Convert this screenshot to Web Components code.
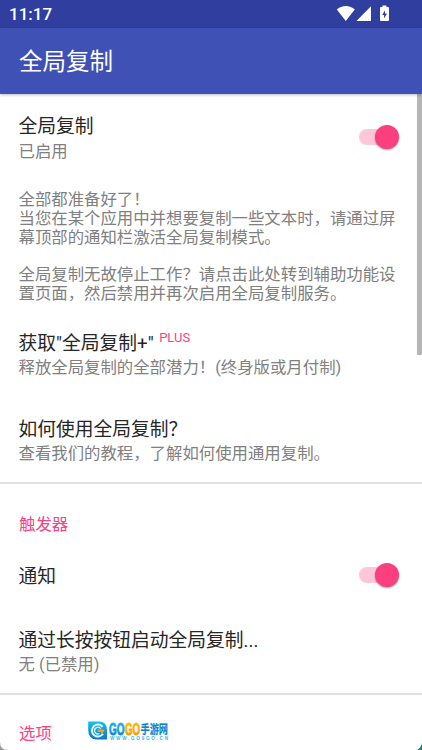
<!DOCTYPE html>
<html lang="zh-CN">
<head>
<meta charset="utf-8">
<title>全局复制</title>
<style>
html,body{margin:0;height:750px;overflow:hidden;background:#fff}
body{font-family:Roboto,"Noto Sans CJK SC",sans-serif;color:#262626}
</style>
</head>
<body>
<app-screen></app-screen>
<script>
const make = (name, html) => customElements.define(name, class extends HTMLElement {
  constructor(){
    super();
    const t = document.createElement('template');
    t.innerHTML = html;
    this.attachShadow({mode:'open'}).append(t.content.cloneNode(true));
  }
});

make('status-bar', `
<style>
:host{display:flex;height:28px;box-sizing:border-box;padding:0 32px 0 9px;align-items:center;justify-content:space-between;background:#303e9f;color:#fff;font-size:17px;line-height:28px;font-weight:500}
svg{display:block;width:54px;height:28px}
</style>
<span>11:17</span>
<svg viewBox="0 0 54 28" fill="#fff">
<path d="M.8 9.6C5.6 4.8 14 4.8 18.8 9.6L9.8 20.9Z"/>
<path d="M20.4 20.9L35 6.2V20.9Z"/>
<path fill-rule="evenodd" d="M46.4 5.4h4V7H52q1 0 1 1v12q0 1-1 1h-7q-1 0-1-1V8q0-1 1-1h1.400ZM49 10.300L46.200 15h1.900v3.400L51 13.600H49Z"/>
</svg>`);

make('app-bar', `
<style>
:host{display:flex;height:66px;box-sizing:border-box;padding:2px 19px 0;align-items:center;background:#3f51b5;color:#fff;font-size:23.5px;line-height:64px;position:relative;z-index:1;box-shadow:0 1px 3px rgba(0,0,0,.25)}
</style><slot></slot>`);

make('pref-switch', `
<style>
:host{display:grid;width:40px;height:24px;align-items:center}
i{grid-area:1/1;display:block}
.track{width:34px;height:16px;border-radius:8px;background:#ffc5d9}
.thumb{width:24px;height:24px;border-radius:50%;background:#fc407f;justify-self:end;box-shadow:0 1px 2px rgba(0,0,0,.38)}
</style><i class="track"></i><i class="thumb"></i>`);

make('pref-row', `
<style>
:host{display:flex;align-items:flex-start;justify-content:space-between;box-sizing:border-box;padding:0 23px 0 18.5px}
.title{font-size:18.75px;line-height:26px;white-space:nowrap}
.sum{font-size:16.4px;line-height:19px;margin-top:var(--gap,1px);color:#808080;white-space:nowrap}
</style>
<div><div class="title"><slot></slot></div><div class="sum"><slot name="summary"></slot></div></div>
<slot name="widget"></slot>`);

make('pref-note', `
<style>
:host{display:block;box-sizing:border-box;padding:0 18.500px;font-size:16.4px;line-height:18.8px;color:#808080}
slot{display:block;white-space:pre}
</style><slot></slot>`);

make('pref-category', `
<style>
:host{display:flex;box-sizing:border-box;align-items:center;padding:0 19px;color:#ff4081;font-size:16.4px;line-height:20px}
</style><slot></slot>`);

make('plus-tag', `
<style>
:host{display:inline-block;margin-left:5.500px;font-size:13px;line-height:12px;color:#ff4081;vertical-align:8px}
</style><slot></slot>`);

make('site-mark', `
<style>
:host{display:block;position:absolute;left:87px;top:719px;width:84px;height:24px}
svg{display:block;overflow:visible}
text{font-family:"Liberation Sans","Noto Sans CJK SC",sans-serif;font-weight:700}
</style>
<svg width="84" height="24" viewBox="0 0 84 24">
<defs>
<linearGradient id="b" x1="0" y1="0" x2="0" y2="1"><stop stop-color="#16c0ef"/><stop offset="1" stop-color="#0877ca"/></linearGradient>
<linearGradient id="o" x1="0" y1="0" x2="0" y2="1"><stop stop-color="#ffc400"/><stop offset="1" stop-color="#ff8b00"/></linearGradient>
</defs>
<path d="M1.200 2.500H12Q20 2.500 20 11V20.500H10Q1.200 20.500 1.200 11Z" fill="url(#b)"/>
<path d="M15.600 7.800A6 6 0 1 0 16 14.800" fill="none" stroke="#e7faff" stroke-width="2"/>
<path d="M13.700 9.800A3.300 3.300 0 1 0 12.500 14.500" fill="none" stroke="#d9f6ff" stroke-width="1.400"/>
<path d="M10.500 10.500H17.700L15 15.800 14 12.900H10.500Z" fill="#ff9f18"/>
<text x="22" y="16" font-size="17" textLength="15.500" lengthAdjust="spacingAndGlyphs" fill="url(#b)" stroke="url(#b)" stroke-width=".8">GO</text>
<text x="38" y="16" font-size="17" textLength="15" lengthAdjust="spacingAndGlyphs" fill="url(#o)" stroke="url(#o)" stroke-width=".8">GO</text>
<text x="53.500" y="15.200" font-size="12.500" textLength="27.500" lengthAdjust="spacingAndGlyphs" fill="#0a83cf" stroke="#0a83cf" stroke-width=".2">手游网</text>
<text x="23" y="21.300" font-size="4.600" textLength="58" fill="#36b4e8">WWW.GO9GO.CN</text>
</svg>`);

make('screen-corners', `
<style>
:host{position:absolute;inset:auto 0 0 0;height:10px;display:flex;justify-content:space-between;align-items:flex-end}
svg{display:block}
</style>
<svg width="8" height="8"><path d="M0 0Q0 8 8 8H0Z" fill="#999"/></svg>
<svg width="5" height="7"><path d="M5 0Q4 5 0 7H5Z" fill="#168276"/></svg>`);

make('app-screen', `
<style>
:host{display:flex;flex-direction:column;position:relative;width:422px;height:750px;overflow:hidden;background:#fff}
main{flex:1;min-height:0;display:flex;flex-direction:column}
main>*{flex:none}
hr{margin:0;border:0;height:2px;background:#e0e0e0}
.bar{position:absolute;right:0;top:94px;width:5px;height:261px;background:#b5b5b5}
.r1{height:86px;padding-top:20px;--gap:2px}
.r1 pref-switch{margin-top:11px}
pref-note{height:123px;padding-top:11px}
.r2{height:100px;padding-top:28px}
.r3{height:79px;padding-top:14px}
.r4{height:63px;padding-top:13px}
.r4 pref-switch{margin-top:-1px}
.r5{height:79px;padding-top:14px}
</style>
<status-bar></status-bar>
<app-bar>全局复制</app-bar>
<main>
<pref-row class="r1">全局复制<span slot="summary">已启用</span><pref-switch slot="widget"></pref-switch></pref-row>
<pref-note>全部都准备好了！
当您在某个应用中并想要复制一些文本时，请通过屏
幕顶部的通知栏激活全局复制模式。

全局复制无故停止工作？请点击此处转到辅助功能设
置页面，然后禁用并再次启用全局复制服务。</pref-note>
<pref-row class="r2">获取"全局复制+"<plus-tag>PLUS</plus-tag><span slot="summary">释放全局复制的全部潜力！(终身版或月付制)</span></pref-row>
<pref-row class="r3">如何使用全局复制？<span slot="summary">查看我们的教程，了解如何使用通用复制。</span></pref-row>
<hr>
<pref-category style="height:67px;padding-top:15px">触发器</pref-category>
<pref-row class="r4">通知<pref-switch slot="widget"></pref-switch></pref-row>
<pref-row class="r5">通过长按按钮启动全局复制...<span slot="summary">无 (已禁用)</span></pref-row>
<hr>
<pref-category style="height:78px">选项</pref-category>
</main>
<div class="bar"></div>
<site-mark></site-mark>
<screen-corners></screen-corners>`);
</script>
</body>
</html>
